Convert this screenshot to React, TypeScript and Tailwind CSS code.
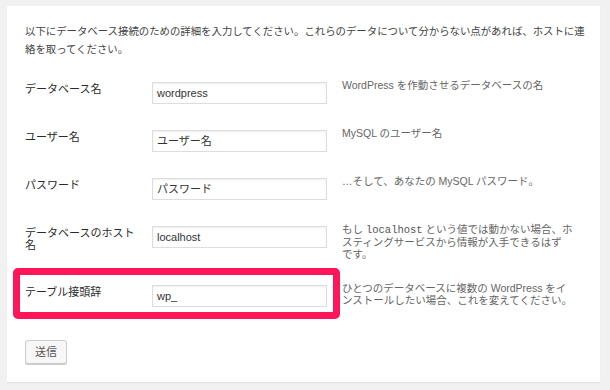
import React from 'react';

type Row = {
  label: React.ReactNode;
  value: string;
  desc: React.ReactNode;
};

const rows: Row[] = [
  { label: 'データベース名', value: 'wordpress', desc: 'WordPress を作動させるデータベースの名' },
  { label: 'ユーザー名', value: 'ユーザー名', desc: 'MySQL のユーザー名' },
  { label: 'パスワード', value: 'パスワード', desc: '…そして、あなたの MySQL パスワード。' },
  {
    label: (
      <>
        データベースのホスト
        <br />名
      </>
    ),
    value: 'localhost',
    desc: (
      <>
        もし <code className="font-['Liberation_Mono',monospace] text-[10.5px] text-[#555]">localhost</code> という値では動かない場合、ホ
        <br />
        スティングサービスから情報が入手できるはず
        <br />
        です。
      </>
    ),
  },
];

const FieldRow: React.FC<{ row: Row }> = ({ row }) => (
  <div className="flex items-start min-h-[26px]">
    <div className="w-[127px] pt-[4px] text-[11px] leading-[12px] text-[#2a2a2a]">{row.label}</div>
    <div className="mt-[3px] w-[175px] h-[22px] border border-[#ddd] bg-white shadow-[inset_0_1px_2px_rgba(0,0,0,0.07)] px-[4px] flex items-center text-[11px] text-[#333]">
      {row.value}
    </div>
    <div className="ml-[15px] text-[10.5px] leading-[12px] text-[#666] whitespace-nowrap">{row.desc}</div>
  </div>
);

export default function App() {
  return (
    <div className="w-[610px] h-[390px] bg-[#f1f1f1] pt-[6px] pl-[7px] font-['Liberation_Sans','Noto_Sans_CJK_JP',sans-serif]">
      <div className="w-[593px] h-[376px] bg-white shadow-[0_1px_1px_rgba(0,0,0,0.06)] pt-[17px] pl-[18px]">
        <p className="text-[10.4px] leading-[18px] text-[#444] whitespace-nowrap">
          以下にデータベース接続のための詳細を入力してください。これらのデータについて分からない点があれば、ホストに連
          <br />
          絡を取ってください。
        </p>

        <div className="mt-[20px] flex flex-col gap-[22px]">
          {rows.map((r, i) => (
            <FieldRow key={i} row={r} />
          ))}

          <div className="relative">
            <div className="absolute -top-[14px] -left-[12px] w-[327px] h-[51px] border-[7px] border-[#ff1659] rounded-[5px] pointer-events-none" />
            <div className="flex items-start min-h-[26px]">
              <div className="w-[127px] pt-[4px] text-[11px] leading-[12px] text-[#2a2a2a]">テーブル接頭辞</div>
              <div className="mt-[3px] w-[175px] h-[22px] border border-[#ddd] bg-white shadow-[inset_0_1px_2px_rgba(0,0,0,0.07)] px-[4px] flex items-center text-[11px] text-[#333]">
                wp_
              </div>
              <div className="ml-[15px] text-[10.5px] leading-[12px] text-[#666] whitespace-nowrap">
                ひとつのデータベースに複数の WordPress をイ
                <br />
                ンストールしたい場合、これを変えてください。
              </div>
            </div>
          </div>
        </div>

        <button className="mt-[32px] w-[42px] h-[24px] rounded-[3px] border border-[#ccc] bg-[#f7f7f7] shadow-[0_1px_0_#ccc] text-[11px] text-[#555]">
          送信
        </button>
      </div>
    </div>
  );
}
